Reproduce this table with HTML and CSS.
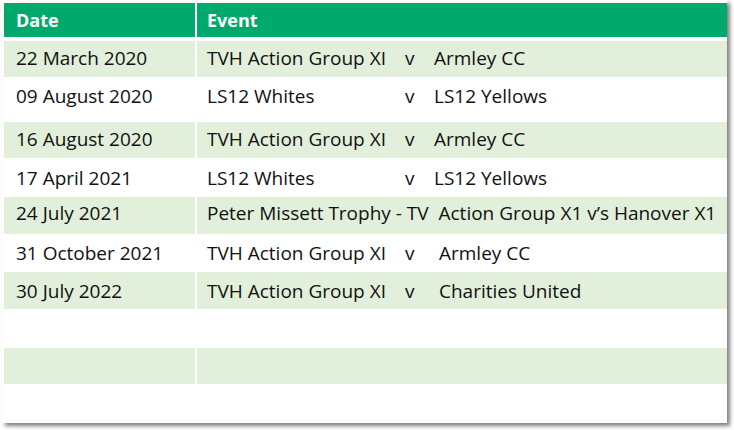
FILE: index.html
```html
<!DOCTYPE html>
<html>
<head>
<meta charset="utf-8">
<link rel="stylesheet" href="styles.css">
</head>
<body>
<div class="sheet">
  <div class="row head">
    <div class="c date">Date</div>
    <div class="c event">Event</div>
  </div>
  <div class="rows">
    <div class="row alt h36 p5">
      <div class="c date">22 March 2020</div>
      <div class="c event"><span class="t1">TVH Action Group XI</span><span class="vs">v</span><span>Armley CC</span></div>
    </div>
    <div class="row h45 p7">
      <div class="c date">09 August 2020</div>
      <div class="c event"><span class="t1">LS12 Whites</span><span class="vs">v</span><span>LS12 Yellows</span></div>
    </div>
    <div class="row alt h36 p5">
      <div class="c date">16 August 2020</div>
      <div class="c event"><span class="t1">TVH Action Group XI</span><span class="vs">v</span><span>Armley CC</span></div>
    </div>
    <div class="row h39 p8">
      <div class="c date">17 April 2021</div>
      <div class="c event"><span class="t1">LS12 Whites</span><span class="vs">v</span><span>LS12 Yellows</span></div>
    </div>
    <div class="row alt h37 p4">
      <div class="c date">24 July 2021</div>
      <div class="c event">Peter Missett Trophy - TV&nbsp; Action Group X1 v’s Hanover X1</div>
    </div>
    <div class="row h38 p7">
      <div class="c date">31 October 2021</div>
      <div class="c event"><span class="t1">TVH Action Group XI</span><span class="vs wide">v</span><span>Armley CC</span></div>
    </div>
    <div class="row alt h37 p7">
      <div class="c date">30 July 2022</div>
      <div class="c event"><span class="t1">TVH Action Group XI</span><span class="vs wide">v</span><span>Charities United</span></div>
    </div>
    <div class="row h39">
      <div class="c date"></div>
      <div class="c event"></div>
    </div>
    <div class="row alt h36">
      <div class="c date"></div>
      <div class="c event"></div>
    </div>
    <div class="row h39">
      <div class="c date"></div>
      <div class="c event"></div>
    </div>
  </div>
</div>
</body>
</html>
```
FILE: styles.css
```css
html, body {
  margin: 0;
  padding: 0;
  background: #ffffff;
}
html {
  height: 430px;
}
body {
  min-height: 430px;
  font-family: "Open Sans", "Noto Sans", sans-serif;
  color: #111111;
}
.sheet {
  box-sizing: border-box;
  width: 725px;
  height: 423px;
  margin-left: 2px;
  padding: 3px 0 0 2px;
  background: #ffffff;
  box-shadow: 3px 3px 4px rgba(0, 0, 0, 0.5);
  overflow: hidden;
}
.row {
  display: grid;
  grid-template-columns: 191px 530px;
  column-gap: 2px;
  box-sizing: border-box;
}
.head {
  height: 34px;
  margin-bottom: 4px;
}
.head .c {
  background: #02a96c;
  color: #ffffff;
  font-weight: 700;
  font-size: 18px;
  line-height: 34px;
}
.c {
  font-size: 19px;
  line-height: 24px;
  white-space: nowrap;
  overflow: hidden;
}
.date {
  padding-left: 12px;
}
.event {
  padding-left: 10px;
  display: flex;
}
.t1 {
  width: 198px;
  flex: none;
}
.vs {
  width: 29px;
  flex: none;
}
.vs.wide {
  width: 34px;
}
.alt .c {
  background: #e2efda;
}
.p4 .c { padding-top: 4px; }
.p5 .c { padding-top: 5px; }
.p7 .c { padding-top: 7px; }
.p8 .c { padding-top: 8px; }
.h36 { height: 36px; }
.h37 { height: 37px; }
.h38 { height: 38px; }
.h39 { height: 39px; }
.h45 { height: 45px; }
```
